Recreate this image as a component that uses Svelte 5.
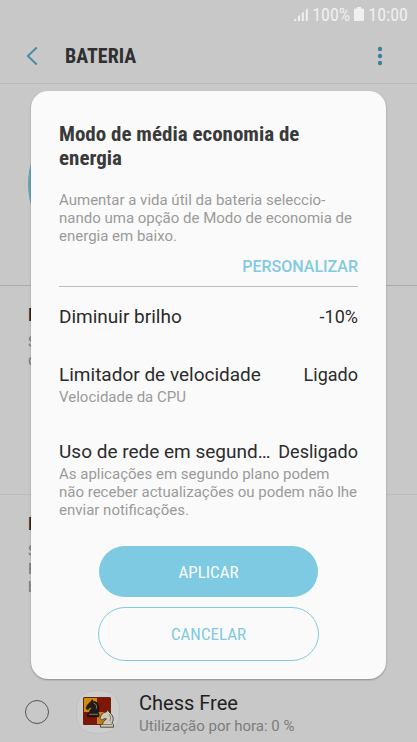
<!--
  Battery screen with the medium power saving dialog open on top.
-->
<script>
  let selected = $state("");

  const settings = [
    { name: "Diminuir brilho", value: "-10%", note: "" },
    { name: "Limitador de velocidade", value: "Ligado", note: "Velocidade da CPU" },
    {
      name: "Uso de rede em segund…",
      value: "Desligado",
      note: "As aplicações em segundo plano podem não receber actualizações ou podem não lhe enviar notificações.",
    },
  ];
</script>

<div class="screen">
  <div class="status-bar">
    <svg class="signal" viewBox="0 0 15 14" aria-hidden="true">
      <path d="M0 14 3.2 11v3zM5 9.4 7 7.8V14H5zM8.8 6.2l2-1.6V14h-2zM12.8 3l2-2v13h-2z" />
    </svg>
    <span>100%</span>
    <svg class="battery" viewBox="0 0 10 14" aria-hidden="true">
      <path d="M3 0h4v1.5h2q1 0 1 1V13q0 1-1 1H1q-1 0-1-1V2.500q0-1 1-1h2z" />
    </svg>
    <span>10:00</span>
  </div>

  <header>
    <button class="icon-button" aria-label="Voltar">
      <svg viewBox="0 0 12 20" width="12" height="20">
        <path d="M10.800 1.500 1.800 10l9 8.500" fill="none" stroke="#438aa3" stroke-width="1.800" />
      </svg>
    </button>
    <h1>BATERIA</h1>
    <button class="icon-button" aria-label="Mais opções">
      <svg viewBox="0 0 6 20" width="6" height="20" fill="#3f7f98">
        <circle cx="3" cy="3" r="2.200" />
        <circle cx="3" cy="10" r="2.200" />
        <circle cx="3" cy="17" r="2.200" />
      </svg>
    </button>
  </header>

  <main>
    <section class="usage">
      <svg viewBox="0 0 136 136" width="136" height="136" aria-hidden="true">
        <circle cx="68" cy="68" r="66.500" fill="none" stroke="#6ba2b4" stroke-width="3" />
      </svg>
    </section>
    <section class="mode first">
      <h2>M</h2>
      <p>S<br />d</p>
    </section>
    <section class="mode second">
      <h2>M</h2>
      <p>S<br />F<br />b</p>
    </section>

    <label class="app">
      <input type="radio" name="app" value="chess" bind:group={selected} />
      <svg class="app-icon" viewBox="0 0 44 44" aria-hidden="true">
        <path d="M22 .5C37 .5 43.500 7 43.500 22S37 43.500 22 43.500.5 37 .5 22 7 .5 22 .5z" fill="#cdcdcd" stroke="#bbb" stroke-width=".7" />
        <!-- board -->
        <rect x="7" y="7" width="28" height="28" rx="1.500" fill="#801706" />
        <path d="M8 8h13v14H8z" fill="#d48b0d" />
        <path d="M21 22h8v12h-8z" fill="#c78410" />
        <rect x="7.500" y="7.500" width="27" height="27" rx="1.200" fill="none" stroke="#5c2a16" stroke-width=".8" />
        <!-- black knight -->
        <path
          d="M16.300 9.500l.8 1.800c4.500.3 6.500 4 5.800 8.200l-.7 3.500.8 1v2.800H11.500V24l1.800-1.300c.2-2.600 1.500-3.500 3.200-5.400l-2.600.2-2 2.300-1.900-1.300c.7-3.200 2.300-4.800 4.600-6.600z"
          fill="#211b18" stroke="#0f0d0c" stroke-width=".6"
        />
        <path d="M13 24.300h9M17.500 13c2.800.5 3.500 3 2.800 5.800" fill="none" stroke="#a8937b" stroke-width=".7" />
        <!-- white knight -->
        <path
          d="M31.600 19.800l-1.200 2.100c-4.100.6-6 3.600-6.400 6.600l1.900 1.600 2.800-1.500 1.700.4c-1.800 1.500-3.600 2.700-3.500 4.700l-2.500 1.200v2.300h13.100v-2.600l-1.600-1.500c2.600-4.200 1.100-8-2.900-11.200z"
          fill="#cfc8b8" stroke="#3c2d20" stroke-width=".8"
        />
        <path d="M26 34.500h10M33 24c1.800 2 1.900 4.500.8 7" fill="none" stroke="#6b5a47" stroke-width=".7" />
      </svg>
      <span class="app-text">
        <span class="app-name">Chess Free</span>
        <span class="app-usage">Utilização por hora: 0 %</span>
      </span>
    </label>
  </main>
</div>

<div class="overlay">
  <div class="dialog" role="dialog" aria-modal="true" aria-labelledby="dialog-title">
    <h2 id="dialog-title">Modo de média economia de energia</h2>
    <p class="intro">
      Aumentar a vida útil da bateria seleccio-<br />nando uma opção de Modo de economia de energia em baixo.
    </p>
    <button class="customize">PERSONALIZAR</button>

    <ul>
      {#each settings as item}
        <li>
          <div class="line">
            <span class="name">{item.name}</span>
            <span>{item.value}</span>
          </div>
          {#if item.note}
            <p>{item.note}</p>
          {/if}
        </li>
      {/each}
    </ul>

    <div class="actions">
      <button class="apply">APLICAR</button>
      <button class="cancel">CANCELAR</button>
    </div>
  </div>
</div>

<style>
  :global(body) {
    background: #c8c8c8;
    font-family: Roboto, sans-serif;
  }

  h1, h2, p, ul {
    margin: 0;
    padding: 0;
  }

  button {
    padding: 0;
    border: 0;
    background: none;
    font-family: "Roboto Condensed", Roboto, sans-serif;
    cursor: pointer;
  }

  .status-bar {
    display: flex;
    justify-content: flex-end;
    align-items: center;
    gap: 4px;
    height: 28px;
    padding-right: 9px;
    color: #f0f0f0;
    font-family: "Roboto Condensed", Roboto, sans-serif;
    font-size: 18px;
  }
  .status-bar svg {
    height: 14px;
    fill: #f0f0f0;
  }
  .signal { width: 15px; }
  .battery { width: 10px; }

  header {
    display: flex;
    align-items: center;
    height: 55px;
    padding: 0 26px;
    border-bottom: 1px solid #bcbcbc;
  }
  header h1 {
    flex: 1;
    padding-left: 27px;
    color: #303030;
    font-family: "Roboto Condensed", Roboto, sans-serif;
    font-size: 20px;
    font-weight: 700;
  }
  .icon-button {
    display: flex;
  }
  .icon-button:last-child {
    padding: 0 8px;
  }

  .usage {
    height: 169px;
    padding: 32px 28px 0;
    border-bottom: 1px solid #acacac;
  }

  .mode {
    box-sizing: border-box;
    padding: 17px 28px 0;
    overflow: hidden;
  }
  .mode.first {
    height: 209px;
    border-bottom: 1px solid #bcbcbc;
  }
  .mode.second {
    height: 187px;
  }
  .mode h2 {
    color: #2b2b2b;
    font-size: 18px;
    line-height: 24px;
  }
  .mode p {
    padding-top: 6px;
    color: #7a7a7a;
    font-size: 15px;
    line-height: 18px;
  }

  .app {
    display: flex;
    align-items: center;
    height: 60px;
    padding: 0 25px;
  }
  .app input {
    appearance: none;
    width: 24px;
    height: 24px;
    margin: 0 27px 0 0;
    border: 1px solid #555;
    border-radius: 50%;
  }
  .app input:checked {
    border: 7px solid #438aa3;
  }
  .app-icon {
    width: 44px;
    height: 44px;
    margin-right: 19px;
  }
  .app-text {
    display: flex;
    flex-direction: column;
    padding-top: 4px;
  }
  .app-name {
    color: #1f1f1f;
    font-size: 20px;
    line-height: 24px;
  }
  .app-usage {
    color: #7c7c7c;
    font-size: 15px;
    line-height: 22px;
  }

  .overlay {
    position: absolute;
    top: 0;
    left: 0;
    right: 0;
    padding: 91px 31px 0;
  }
  .dialog {
    padding: 31px 28px 18px;
    border-radius: 17px;
    background: #fafafa;
    box-shadow: 0 1px 2px rgba(0, 0, 0, 0.3);
  }
  .dialog h2 {
    color: #3a3a3a;
    font-family: "Roboto Condensed", Roboto, sans-serif;
    font-size: 21px;
    font-weight: 700;
    line-height: 24px;
  }
  .intro {
    padding-top: 21px;
    color: #9a9a9a;
    font-size: 15px;
    line-height: 18px;
  }
  .customize {
    display: block;
    margin: 10px 0 7px auto;
    color: #81cae1;
    font-family: Roboto, sans-serif;
    font-size: 16px;
    font-weight: 500;
    line-height: 24px;
  }

  ul {
    display: flex;
    flex-direction: column;
    gap: 34px;
    padding-top: 18px;
    border-top: 1px solid #bdbdbd;
    list-style: none;
  }
  .line {
    display: flex;
    justify-content: space-between;
    align-items: baseline;
    color: #2b2b2b;
    font-size: 18px;
    line-height: 24px;
  }
  .name {
    font-size: 19px;
  }
  li p {
    padding-top: 1px;
    color: #9a9a9a;
    font-size: 15px;
    line-height: 18px;
  }

  .actions {
    display: flex;
    flex-direction: column;
    gap: 10px;
    padding: 27px 39px 0;
  }
  .actions button {
    border-radius: 27px;
    font-size: 17px;
  }
  .apply {
    height: 51px;
    margin: 0 1px;
    background: #7ecae2;
    color: #fafafa;
  }
  .cancel {
    height: 54px;
    border: 1px solid #81cae1;
    color: #81cae1;
  }
</style>
